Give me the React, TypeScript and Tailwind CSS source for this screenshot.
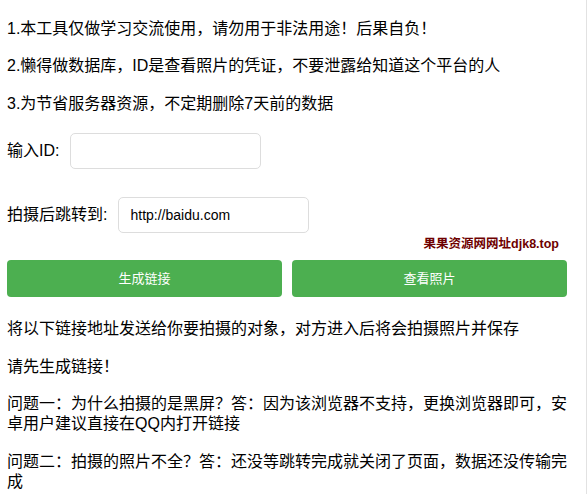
import * as React from 'react';

const font = { fontFamily: '"Liberation Sans", "Noto Sans CJK SC", sans-serif' };

function Field({ label, value }: { label: string; value?: string }) {
    return (
        <div className="flex items-center">
            <span className="text-[16px] leading-[20px] text-black">{label}:</span>
            <input
                defaultValue={value}
                className="ml-[11px] h-[36px] w-[191px] rounded-[5px] border border-[#dddddd] bg-white px-[11px] text-[14px] text-black outline-none"
            />
        </div>
    );
}

export default function App() {
    return (
        <div className="w-[587px] min-h-screen border-r border-[#e2e2e2] bg-white" style={font}>
            <div className="w-[567px] pl-[7px] pb-[20px] text-[16px] leading-[20px] text-black">
                {/* Notice */}
                <p className="pt-[19px]">1.本工具仅做学习交流使用，请勿用于非法用途！后果自负！</p>
                <p className="mt-[17px]">2.懒得做数据库，ID是查看照片的凭证，不要泄露给知道这个平台的人</p>
                <p className="mt-[18px]">3.为节省服务器资源，不定期删除7天前的数据</p>

                {/* Form */}
                <div className="mt-[19px]">
                    <Field label="输入ID" />
                </div>
                <div className="mt-[28px]">
                    <Field label="拍摄后跳转到" value="http://baidu.com" />
                </div>

                <div className="mt-[5px] pr-[8px] text-right text-[12.5px] font-bold leading-[12px] text-[#6e0000]">
                    果果资源网网址djk8.top
                </div>

                <div className="mt-[10px] grid grid-cols-2 gap-[10px]">
                    <button className="h-[37px] rounded-[4px] bg-[#4caf50] text-[13px] text-white">生成链接</button>
                    <button className="h-[37px] rounded-[4px] bg-[#4caf50] text-[13px] text-white">查看照片</button>
                </div>

                {/* Help */}
                <p className="mt-[22px]">将以下链接地址发送给你要拍摄的对象，对方进入后将会拍摄照片并保存</p>
                <p className="mt-[18px]">请先生成链接！</p>
                <p className="mt-[17px]">问题一：为什么拍摄的是黑屏？答：因为该浏览器不支持，更换浏览器即可，安卓用户建议直接在QQ内打开链接</p>
                <p className="mt-[18px]">问题二：拍摄的照片不全？答：还没等跳转完成就关闭了页面，数据还没传输完成</p>
            </div>
        </div>
    );
}
